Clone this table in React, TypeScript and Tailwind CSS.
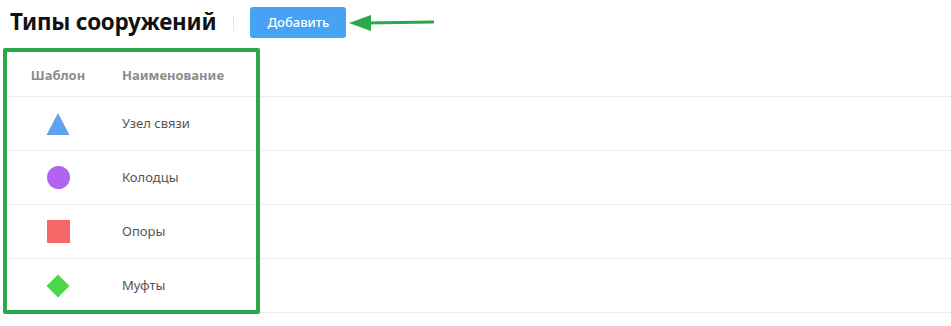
import React from 'react';

const ROWS = [
  { name: 'Узел связи', shape: 'triangle' },
  { name: 'Колодцы', shape: 'circle' },
  { name: 'Опоры', shape: 'square' },
  { name: 'Муфты', shape: 'diamond' },
];

function Shape({ kind }: { kind: string }) {
  if (kind === 'triangle') {
    return (
      <svg width="24" height="24" viewBox="0 0 24 24">
        <polygon points="12,1 23.5,23 0.5,23" fill="#5ea3f2" />
      </svg>
    );
  }
  if (kind === 'circle') {
    return <div className="w-[23px] h-[23px] rounded-full bg-[#b263f2]" />;
  }
  if (kind === 'square') {
    return <div className="w-[23px] h-[23px] bg-[#f76767]" />;
  }
  return (
    <svg width="24" height="24" viewBox="0 0 24 24">
      <polygon points="12,0.5 23.5,12 12,23.5 0.5,12" fill="#4dd64a" />
    </svg>
  );
}

export default function App() {
  return (
    <div
      className="relative w-[951px] h-[326px] bg-white overflow-hidden"
      style={{ fontFamily: '"Noto Sans", "Open Sans", sans-serif' }}
    >
      {/* page header */}
      <div className="flex items-center h-[48px] pl-[10px] pb-[3px]">
        <h1 className="text-[22.4px] font-bold text-[#111] leading-none tracking-[-0.2px]">Типы сооружений</h1>
        <div className="w-px h-[16px] bg-[#e4e4e4] ml-[17px] mr-[16px]" />
        <button className="w-[96px] h-[31px] rounded-[3px] bg-[#45a2f5] text-white text-[13px] font-medium">
          Добавить
        </button>
        <svg width="86" height="20" viewBox="0 0 86 20" className="ml-[2px]">
          <line x1="18" y1="10" x2="85" y2="9" stroke="#2aa84a" strokeWidth="3" strokeLinecap="round" />
          <polygon points="1,10 23,2 23,18" fill="#2aa84a" />
        </svg>
      </div>

      {/* table */}
      <div className="ml-[7px]">
        <div className="flex items-center h-[49px] pt-[8px] border-b border-[#ececec] text-[13px] font-bold text-[#8c8c8c]">
          <div className="w-[102px] text-center">Шаблон</div>
          <div className="pl-[13px]">Наименование</div>
        </div>
        {ROWS.map((r) => (
          <div key={r.name} className="flex items-center h-[54px] border-b border-[#ececec] text-[13px] text-[#555]">
            <div className="w-[102px] flex justify-center">
              <Shape kind={r.shape} />
            </div>
            <div className="pl-[13px]">{r.name}</div>
          </div>
        ))}
      </div>

      {/* highlight annotation */}
      <div className="absolute left-[3px] top-[48px] w-[257px] h-[266px] border-4 border-[#2aa84a] rounded-[2px] pointer-events-none" />
    </div>
  );
}
